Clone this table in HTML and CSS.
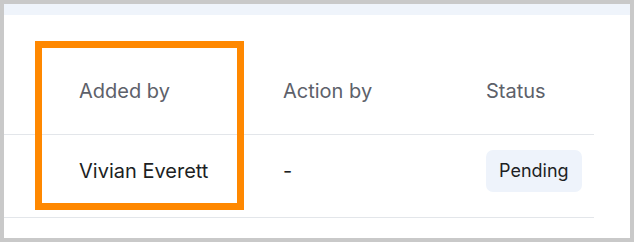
FILE: index.html
```html
<!DOCTYPE html>
<html lang="en">
<head>
    <meta charset="UTF-8">
    <meta name="viewport" content="width=device-width, initial-scale=1.0">
    <title>Requests</title>
    <link rel="stylesheet" href="styles.css">
</head>
<body>
    <div class="panel">
        <div class="top-band"></div>
        <div class="table">
            <div class="row head-row">
                <div class="cell">Added by</div>
                <div class="cell">Action by</div>
                <div class="cell">Status</div>
            </div>
            <div class="row body-row">
                <div class="cell">Vivian Everett</div>
                <div class="cell">-</div>
                <div class="cell"><span class="badge">Pending</span></div>
            </div>
        </div>
        <div class="highlight"></div>
    </div>
</body>
</html>
```

FILE: styles.css
```css
* {
    box-sizing: border-box;
}

body {
    margin: 0;
    padding: 4px;
    width: 634px;
    height: 242px;
    background-color: #c9c9c9;
    font-family: Inter, "Noto Sans", sans-serif;
}

.panel {
    position: relative;
    height: 234px;
    background-color: #fff;
}

.top-band {
    height: 11px;
    background-color: #eff4fb;
}

.table {
    width: 590px;
}

.row {
    display: grid;
    grid-template-columns: 204px 203px 1fr;
    align-items: center;
    padding-left: 75px;
    border-bottom: 1px solid #e3e6ea;
    line-height: 24px;
}

.head-row {
    padding-top: 64px;
    padding-bottom: 31px;
    font-size: 20px;
    color: #5d616a;
}

.body-row {
    padding-top: 15px;
    padding-bottom: 25px;
    font-size: 20px;
    color: #1d1f24;
}

.badge {
    display: inline-block;
    padding: 9px 13px;
    border-radius: 7px;
    background-color: #eef3fb;
    font-size: 18px;
}

.highlight {
    position: absolute;
    left: 31px;
    top: 37px;
    width: 209px;
    height: 169px;
    border: 7px solid #ff8800;
}
```
